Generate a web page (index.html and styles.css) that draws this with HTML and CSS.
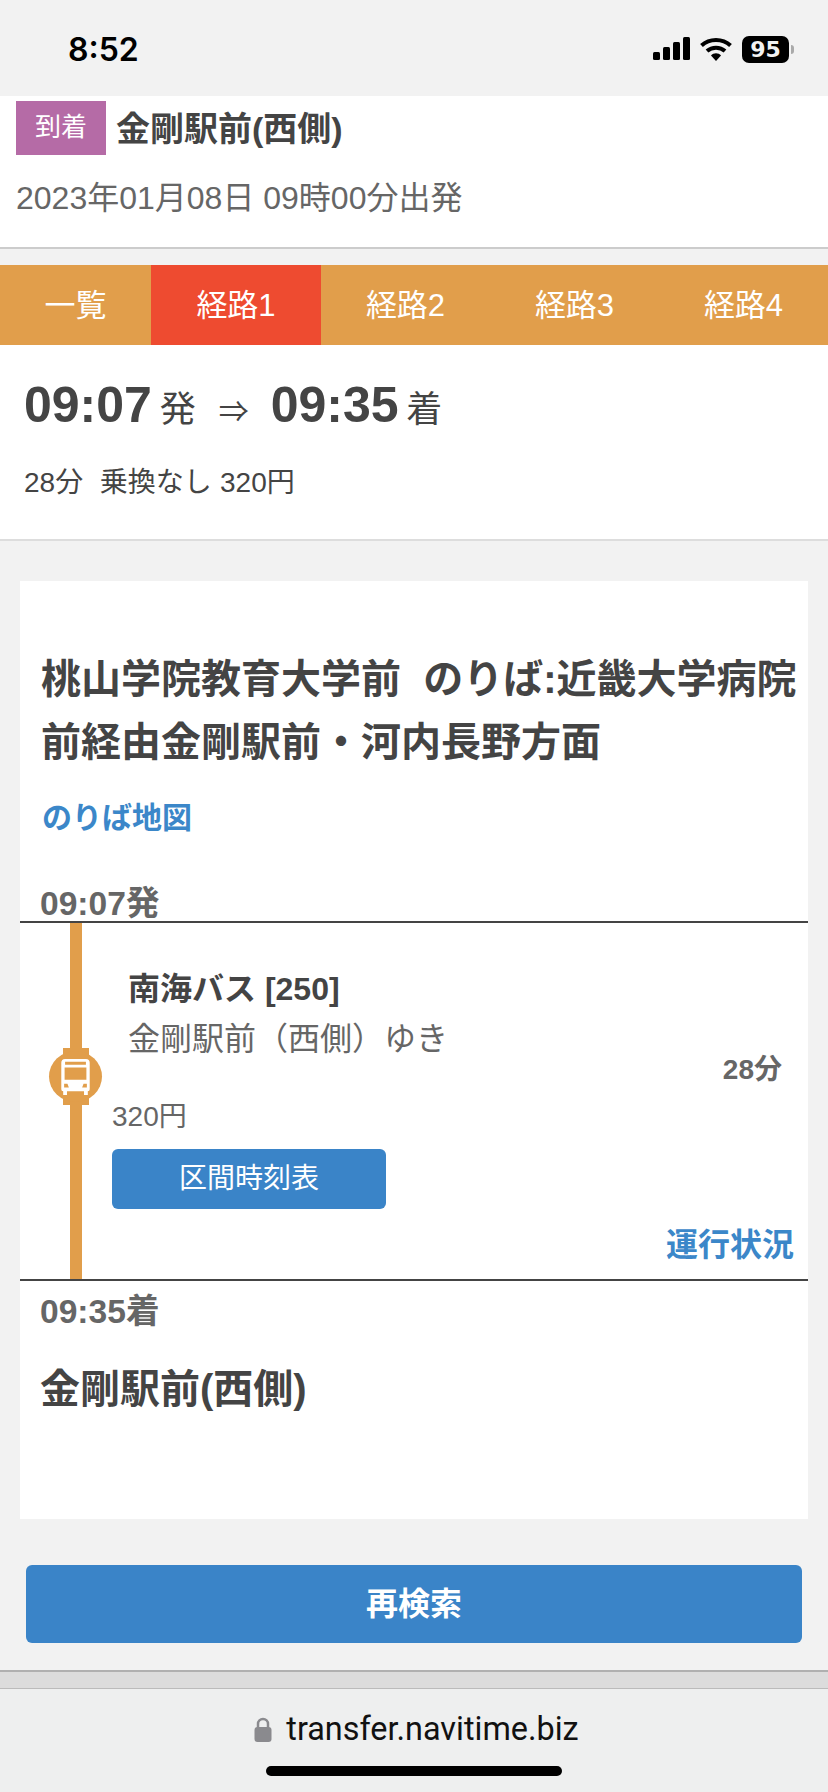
FILE: index.html
```html
<!DOCTYPE html>
<html>
	<head>
		<meta charset="UTF-8">
		<title>経路</title>
		<link rel="stylesheet" href="styles.css">
	</head>

	<body>
		<div class="status">
			<span class="clock">8:52</span>
			<div class="status-icons">
				<svg class="signal" width="38" height="24" viewBox="0 0 38 24"><rect x="0" y="15" width="7" height="8" rx="1.5"/><rect x="10" y="10" width="7" height="13" rx="1.5"/><rect x="20" y="5" width="7" height="18" rx="1.5"/><rect x="30" y="0" width="7" height="23" rx="1.5"/></svg>
				<svg class="wifi" width="32" height="24" viewBox="0 0 32 24"><path d="M1.5 8.5C9.5 1 22.5 1 30.500 8.500" fill="none" stroke="#000" stroke-width="4"/><path d="M7 14C12 9.500 20 9.500 25 14" fill="none" stroke="#000" stroke-width="4"/><path d="M11 18.500C13.500 15.500 18.500 15.500 21 18.500L16 24Z"/></svg>
				<div class="battery"><span class="battery-num">95</span></div>
				<div class="battery-nub"></div>
			</div>
		</div>

		<div class="cond">
			<div class="cond-row">
				<span class="tag">到着</span>
				<span class="cond-name">金剛駅前(西側)</span>
			</div>
			<p class="cond-date">2023年01月08日 09時00分出発</p>
		</div>

		<ul class="tabs">
			<li class="tab-first">一覧</li>
			<li class="on">経路1</li>
			<li>経路2</li>
			<li>経路3</li>
			<li>経路4</li>
		</ul>

		<div class="summary">
			<p class="summary-time"><b>09:07</b> <span class="small">発</span><span class="arrow">⇒</span><b>09:35</b> <span class="small">着</span></p>
			<p class="summary-info">28分&nbsp;&nbsp;乗換なし 320円</p>
		</div>

		<div class="card">
			<h2 class="stop-title">桃山学院教育大学前&nbsp;&nbsp;のりば:近畿大学病院前経由金剛駅前・河内長野方面</h2>
			<a class="map-link">のりば地図</a>
			<p class="stamp stamp-dep">09:07発</p>

			<div class="leg">
				<div class="rail">
					<div class="bar bar-top"></div>
					<div class="neck">
						<div class="disc">
							<svg width="29" height="36" viewBox="0 0 30 38"><path fill="#fff" fill-rule="evenodd" d="M4 0H26Q30 0 30 4V32Q30 34 28 34V38H24V34H6V38H2V34Q0 34 0 32V4Q0 0 4 0ZM4 3V6H26V3ZM3.500 9V22H26.500V9ZM3 26V30H8L6.500 26ZM27 26H23.500L22 30H27Z"/></svg>
						</div>
					</div>
					<div class="bar"></div>
				</div>
				<div class="leg-body">
					<p class="line-name">南海バス [250]</p>
					<p class="line-dest">金剛駅前（西側）ゆき</p>
					<p class="leg-min">28分</p>
					<p class="leg-fare">320円</p>
					<a class="btn-table">区間時刻表</a>
					<a class="status-link">運行状況</a>
				</div>
			</div>

			<p class="stamp stamp-arr">09:35着</p>
			<h2 class="arr-name">金剛駅前(西側)</h2>
		</div>

		<a class="btn-search">再検索</a>

		<div class="foot-strip"></div>
		<div class="urlbar">
			<div class="url">
				<svg width="18" height="25" viewBox="0 0 18 25"><path d="M4 11V7a5 5 0 0 1 10 0V11" fill="none" stroke="#8a8a8e" stroke-width="2.500"/><rect x="0.500" y="10" width="17" height="15" rx="3" fill="#8a8a8e"/></svg>
				<span>transfer.navitime.biz</span>
			</div>
			<div class="home-bar"></div>
		</div>
	</body>
</html>
```

FILE: styles.css
```css
*{
	margin: 0;
	padding: 0;
	box-sizing: border-box;
}
html, body{
	width: 828px;
	height: 1792px;
	overflow: hidden;
}
body{
	background: #f2f2f2;
	color: #444;
	font-family: "Liberation Sans", "Noto Sans CJK JP", sans-serif;
}
ul{
	list-style: none;
}

/* status bar */
.status{
	height: 96px;
	display: flex;
	justify-content: space-between;
	align-items: center;
	padding: 2px 34px 0 68px;
	color: #000;
}
.clock{
	font-family: Inter, sans-serif;
	font-size: 32px;
	font-weight: 600;
}
.status-icons{
	display: flex;
	align-items: center;
}
.signal{
	margin-right: 9px;
}
.wifi{
	margin-right: 10px;
}
.battery{
	width: 47px;
	height: 27px;
	background: #000;
	border-radius: 7px;
	display: flex;
	align-items: center;
	justify-content: center;
}
.battery-num{
	color: #f2f2f2;
	font-family: "DejaVu Sans", sans-serif;
	font-size: 22px;
	font-weight: bold;
}
.battery-nub{
	width: 3px;
	height: 9px;
	margin-left: 2px;
	background: #aaa;
	border-radius: 0 3px 3px 0;
}

/* search condition */
.cond{
	height: 153px;
	background: #fff;
	border-bottom: 2px solid #ccc;
	padding: 5px 16px 0;
}
.cond-row{
	display: flex;
	align-items: center;
}
.tag{
	width: 90px;
	height: 54px;
	line-height: 52px;
	text-align: center;
	background: #b56ba6;
	color: #fff;
	font-size: 26px;
}
.cond-name{
	margin-left: 10px;
	padding-bottom: 4px;
	font-size: 34px;
	font-weight: bold;
}
.cond-date{
	margin-top: 24px;
	font-size: 32px;
	line-height: 38px;
	color: #666;
}

/* tabs */
.tabs{
	display: flex;
	height: 80px;
	margin-top: 16px;
	background: #e19e4b;
}
.tabs li{
	width: 169px;
	line-height: 82px;
	text-align: center;
	color: #fff;
	font-size: 31px;
}
.tabs .tab-first{
	width: 151px;
}
.tabs .on{
	width: 170px;
	background: #ee4b30;
}

/* summary */
.summary{
	height: 196px;
	background: #fff;
	border-bottom: 2px solid #ddd;
	padding: 30px 24px 0;
}
.summary-time{
	line-height: 60px;
	font-size: 28px;
	white-space: nowrap;
}
.summary-time b{
	font-size: 50px;
}
.summary-time .small{
	font-size: 36px;
}
.arrow{
	font-size: 30px;
	margin: 0 22px 0 23px;
}
.summary-info{
	margin-top: 23px;
	font-size: 28px;
	line-height: 34px;
	word-spacing: 0.500px;
}

/* route card */
.card{
	width: 788px;
	height: 938px;
	margin: 40px 0 0 20px;
	background: #fff;
	padding-top: 67px;
}
.stop-title{
	padding: 0 11px 0 21px;
	font-size: 40px;
	line-height: 63px;
}
.map-link{
	display: block;
	margin: 25px 0 0 22px;
	color: #3b87c9;
	font-size: 30px;
	font-weight: bold;
	line-height: 38px;
}
.stamp{
	margin-left: 20px;
	color: #666;
	font-size: 33.600px;
	font-weight: bold;
	line-height: 35px;
}
.stamp-dep{
	margin-top: 49px;
}
.leg{
	display: flex;
	height: 360px;
	border-top: 2px solid #444;
	border-bottom: 2px solid #444;
}
.rail{
	width: 53px;
	margin-left: 29px;
	display: flex;
	flex-direction: column;
	align-items: center;
}
.bar{
	flex: 1;
	width: 12px;
	background: #e19e4b;
}
.neck{
	width: 26px;
	height: 57px;
	background: #e19e4b;
	display: flex;
	align-items: center;
	justify-content: center;
}
.bar-top{
	flex: none;
	height: 125px;
}
.disc{
	flex: none;
	width: 53px;
	height: 51px;
	border-radius: 50%;
	background: #e19e4b;
	display: flex;
	align-items: center;
	justify-content: center;
}
.leg-body{
	flex: 1;
	padding: 0 14px 0 10px;
	display: flex;
	flex-direction: column;
}
.line-name{
	margin: 46px 0 0 16px;
	font-size: 32px;
	font-weight: bold;
	line-height: 40px;
}
.line-dest{
	margin: 10px 0 0 16px;
	color: #666;
	font-size: 32px;
	line-height: 40px;
}
.leg-min{
	margin: -7px 12px 0 0;
	text-align: right;
	color: #666;
	font-size: 28px;
	font-weight: bold;
	line-height: 36px;
}
.leg-fare{
	margin-top: 11px;
	color: #666;
	font-size: 28px;
	line-height: 36px;
}
.btn-table{
	display: block;
	width: 274px;
	height: 60px;
	margin-top: 14px;
	line-height: 60px;
	text-align: center;
	background: #3a84c8;
	border-radius: 6px;
	color: #fff;
	font-size: 28px;
}
.status-link{
	margin-top: 16px;
	text-align: right;
	color: #3b87c9;
	font-size: 32px;
	font-weight: bold;
	line-height: 40px;
}
.stamp-arr{
	margin-top: 13px;
}
.arr-name{
	margin: 35px 0 0 20px;
	font-size: 40px;
	line-height: 50px;
}

/* bottom */
.btn-search{
	display: block;
	width: 776px;
	height: 78px;
	margin: 46px 0 0 26px;
	line-height: 78px;
	text-align: center;
	background: #3a84c8;
	border-radius: 6px;
	color: #fff;
	font-size: 32px;
	font-weight: bold;
}
.foot-strip{
	height: 19px;
	margin-top: 27px;
	background: #dcdcdc;
	border-top: 2px solid #b0b0b0;
	border-bottom: 1px solid #bbb;
}
.urlbar{
	height: 103px;
	background: #eeefef;
	display: flex;
	flex-direction: column;
	align-items: center;
}
.url{
	display: flex;
	align-items: center;
	margin: 21px 0 0 5px;
	height: 38px;
	color: #111;
	font-family: Roboto, sans-serif;
	font-size: 32.400px;
}
.url svg{
	margin-right: 14px;
}
.home-bar{
	width: 296px;
	height: 10px;
	margin-top: 18px;
	background: #000;
	border-radius: 5px;
}
```
